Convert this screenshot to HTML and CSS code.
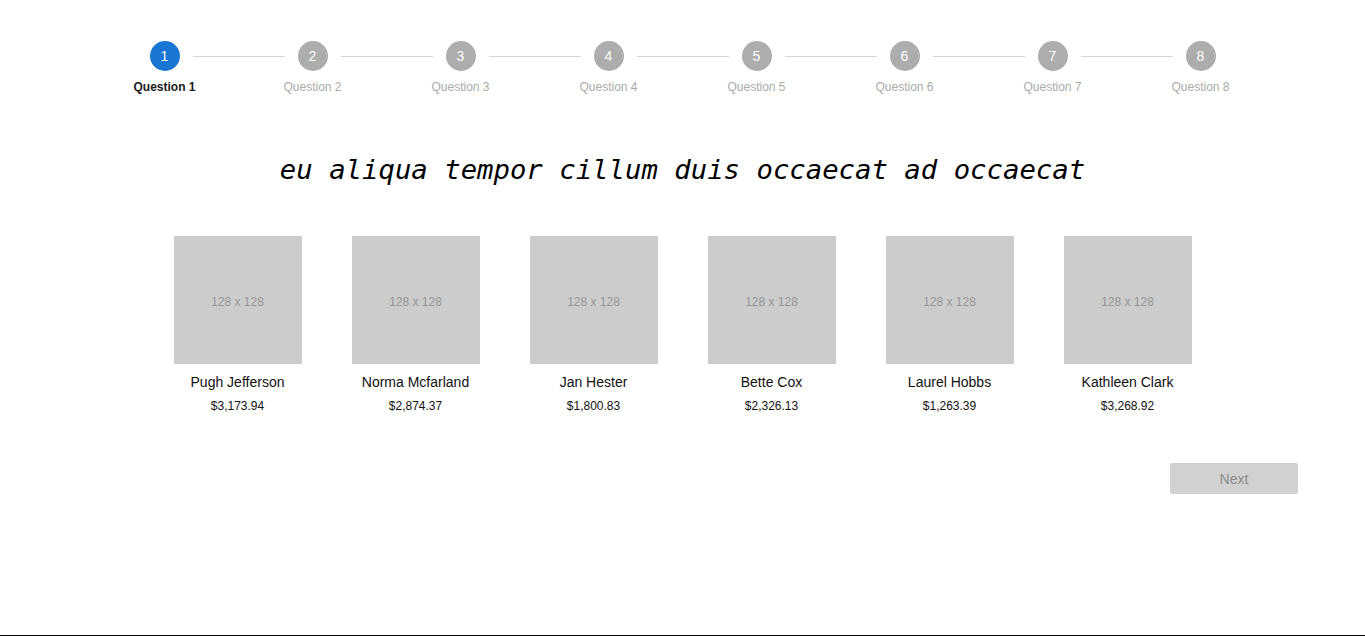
FILE: index.html
```html
<!DOCTYPE html>
<html>
<head>
<meta charset="utf-8">
<link rel="stylesheet" href="styles.css">
</head>
<body>
<div class="page">
  <div class="stepper">
    <div class="step active"><div class="circle">1</div><div class="label">Question 1</div></div>
    <div class="step"><div class="connector"></div><div class="circle">2</div><div class="label">Question 2</div></div>
    <div class="step"><div class="connector"></div><div class="circle">3</div><div class="label">Question 3</div></div>
    <div class="step"><div class="connector"></div><div class="circle">4</div><div class="label">Question 4</div></div>
    <div class="step"><div class="connector"></div><div class="circle">5</div><div class="label">Question 5</div></div>
    <div class="step"><div class="connector"></div><div class="circle">6</div><div class="label">Question 6</div></div>
    <div class="step"><div class="connector"></div><div class="circle">7</div><div class="label">Question 7</div></div>
    <div class="step"><div class="connector"></div><div class="circle">8</div><div class="label">Question 8</div></div>
  </div>
  <h1 class="question">eu aliqua tempor cillum duis occaecat ad occaecat</h1>
  <div class="cards">
    <div class="card"><div class="thumb">128 x 128</div><div class="name">Pugh Jefferson</div><div class="price">$3,173.94</div></div>
    <div class="card"><div class="thumb">128 x 128</div><div class="name">Norma Mcfarland</div><div class="price">$2,874.37</div></div>
    <div class="card"><div class="thumb">128 x 128</div><div class="name">Jan Hester</div><div class="price">$1,800.83</div></div>
    <div class="card"><div class="thumb">128 x 128</div><div class="name">Bette Cox</div><div class="price">$2,326.13</div></div>
    <div class="card"><div class="thumb">128 x 128</div><div class="name">Laurel Hobbs</div><div class="price">$1,263.39</div></div>
    <div class="card"><div class="thumb">128 x 128</div><div class="name">Kathleen Clark</div><div class="price">$3,268.92</div></div>
  </div>
  <div class="actions">
    <button class="next" disabled>Next</button>
  </div>
  <div class="spacer"></div>
  <div class="bottom-line"></div>
</div>
</body>
</html>
```
FILE: styles.css
```css
html, body {
  margin: 0;
  padding: 0;
  background: #fff;
  font-family: "Liberation Sans", Arial, sans-serif;
}
.page {
  display: flex;
  flex-direction: column;
  height: 636px;
}
.stepper {
  display: flex;
  width: 1184px;
  margin: 41px auto 0;
}
.step {
  position: relative;
  flex: 0 0 148px;
  display: flex;
  flex-direction: column;
  align-items: center;
}
.connector {
  position: absolute;
  top: 15px;
  left: calc(-50% + 28px);
  right: calc(50% + 28px);
  border-top: 1px solid #d6d6d6;
}
.circle {
  width: 30px;
  height: 30px;
  border-radius: 50%;
  background: #adadad;
  color: #fff;
  font-size: 14px;
  line-height: 30px;
  text-align: center;
}
.label {
  margin-top: 9px;
  font-size: 12px;
  line-height: 14px;
  color: #aaaaaa;
}
.step.active .circle {
  background: #1976d2;
}
.step.active .label {
  color: #1a1a1a;
  font-weight: bold;
}
.question {
  margin: 59px 0 0;
  text-align: center;
  font-family: "DejaVu Sans Mono", monospace;
  font-style: italic;
  font-weight: normal;
  font-size: 27.3px;
  line-height: 34px;
  color: #000;
}
.cards {
  display: flex;
  justify-content: center;
  gap: 50px;
  margin-top: 49px;
}
.card {
  width: 128px;
  display: flex;
  flex-direction: column;
  align-items: center;
}
.thumb {
  box-sizing: border-box;
  width: 128px;
  height: 128px;
  padding-top: 4px;
  background: #cccccc;
  color: #969696;
  font-size: 12px;
  display: flex;
  align-items: center;
  justify-content: center;
}
.name {
  margin-top: 10px;
  font-size: 14px;
  line-height: 16px;
  color: #111;
  white-space: nowrap;
}
.price {
  margin-top: 9px;
  font-size: 12px;
  line-height: 14px;
  color: #111;
}
.actions {
  display: flex;
  justify-content: flex-end;
  padding-right: 67px;
  margin-top: 50px;
}
.next {
  width: 128px;
  height: 31px;
  border: none;
  border-radius: 2px;
  background: #d1d1d1;
  color: #8a8a8a;
  font-family: "Liberation Sans", Arial, sans-serif;
  font-size: 14px;
}
.spacer {
  flex: 1;
}
.bottom-line {
  height: 1px;
  background: #000;
}
```
